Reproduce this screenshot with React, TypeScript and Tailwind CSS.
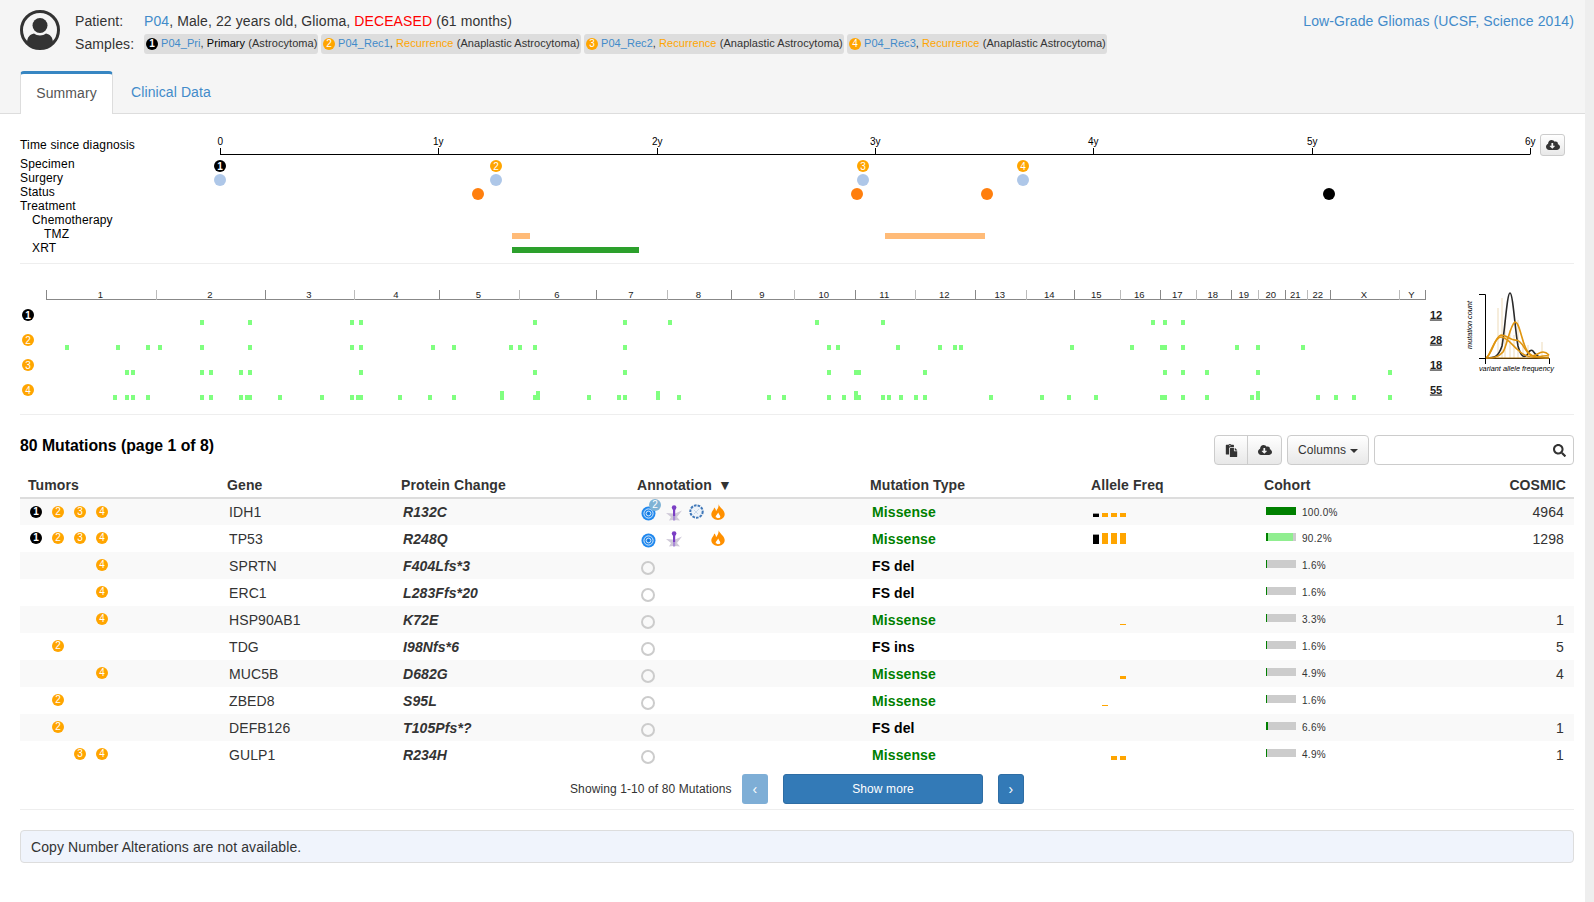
import { FaCloudDownloadAlt, FaPaste, FaSearch } from 'react-icons/fa';

const ORANGE = '#ffa500';

// page-coordinate data for the two charts, x values read off the plot
const chromTicks = [46, 156, 265, 354, 439, 519, 596, 667, 731, 794, 855, 915, 975, 1026, 1074, 1120, 1160, 1196, 1231, 1258, 1285, 1307, 1330, 1399, 1425];
const chromNames = ['1', '2', '3', '4', '5', '6', '7', '8', '9', '10', '11', '12', '13', '14', '15', '16', '17', '18', '19', '20', '21', '22', 'X', 'Y'];

const genomeRows = [
  { y: 325, count: 12, xs: [202, 250, 352, 361, 535, 625, 670, 817, 883, 1153, 1165, 1183], tall: [] as number[] },
  { y: 350, count: 28, xs: [67, 118, 148, 160, 202, 250, 352, 361, 433, 454, 511, 520, 535, 625, 829, 838, 898, 940, 955, 961, 1072, 1132, 1162, 1165, 1183, 1237, 1258, 1303], tall: [] as number[] },
  { y: 375, count: 18, xs: [127, 133, 202, 211, 241, 250, 361, 535, 625, 829, 856, 859, 925, 1165, 1183, 1207, 1258, 1390], tall: [] as number[] },
  { y: 400, count: 55, xs: [115, 127, 133, 148, 202, 211, 241, 247, 250, 280, 322, 352, 358, 361, 400, 430, 454, 535, 589, 619, 625, 679, 769, 784, 829, 844, 859, 883, 889, 901, 916, 925, 991, 1042, 1069, 1096, 1162, 1165, 1183, 1207, 1252, 1318, 1336, 1354, 1390], tall: [502, 538, 658, 856, 1258] },
];

type Mutation = {
  tumors: number[];
  gene: string;
  protein: string;
  type: string;
  annotated?: 'full' | 'partial';
  freq?: number[];
  cohort: number;
  cohortLabel: string;
  cosmic?: number;
};

const mutations: Mutation[] = [
  { tumors: [1, 2, 3, 4], gene: 'IDH1', protein: 'R132C', type: 'Missense', annotated: 'full', freq: [4, 4, 4, 4], cohort: 100, cohortLabel: '100.0%', cosmic: 4964 },
  { tumors: [1, 2, 3, 4], gene: 'TP53', protein: 'R248Q', type: 'Missense', annotated: 'partial', freq: [10, 11, 11, 11], cohort: 90.2, cohortLabel: '90.2%', cosmic: 1298 },
  { tumors: [4], gene: 'SPRTN', protein: 'F404Lfs*3', type: 'FS del', cohort: 1.6, cohortLabel: '1.6%' },
  { tumors: [4], gene: 'ERC1', protein: 'L283Ffs*20', type: 'FS del', cohort: 1.6, cohortLabel: '1.6%' },
  { tumors: [4], gene: 'HSP90AB1', protein: 'K72E', type: 'Missense', freq: [0, 0, 0, 1], cohort: 3.3, cohortLabel: '3.3%', cosmic: 1 },
  { tumors: [2], gene: 'TDG', protein: 'I98Nfs*6', type: 'FS ins', cohort: 1.6, cohortLabel: '1.6%', cosmic: 5 },
  { tumors: [4], gene: 'MUC5B', protein: 'D682G', type: 'Missense', freq: [0, 0, 0, 3], cohort: 4.9, cohortLabel: '4.9%', cosmic: 4 },
  { tumors: [2], gene: 'ZBED8', protein: 'S95L', type: 'Missense', freq: [0, 1, 0, 0], cohort: 1.6, cohortLabel: '1.6%' },
  { tumors: [2], gene: 'DEFB126', protein: 'T105Pfs*?', type: 'FS del', cohort: 6.6, cohortLabel: '6.6%', cosmic: 1 },
  { tumors: [3, 4], gene: 'GULP1', protein: 'R234H', type: 'Missense', freq: [0, 0, 4, 4], cohort: 4.9, cohortLabel: '4.9%', cosmic: 1 },
];

const samples = [
  { n: 1, name: 'P04_Pri', kind: 'Primary', kindClass: 'text-black', diag: 'Astrocytoma' },
  { n: 2, name: 'P04_Rec1', kind: 'Recurrence', kindClass: 'text-[#ffa500]', diag: 'Anaplastic Astrocytoma' },
  { n: 3, name: 'P04_Rec2', kind: 'Recurrence', kindClass: 'text-[#ffa500]', diag: 'Anaplastic Astrocytoma' },
  { n: 4, name: 'P04_Rec3', kind: 'Recurrence', kindClass: 'text-[#ffa500]', diag: 'Anaplastic Astrocytoma' },
];

function Dot({ n }: { n: number }) {
  return (
    <span
      className={`flex h-3 w-3 shrink-0 items-center justify-center rounded-full text-[10px] leading-none tracking-normal text-white ${n === 1 ? 'bg-black font-bold' : 'bg-[#ffa500]'}`}>
      {n}
    </span>
  );
}

function SvgDot({ x, y, n, r = 6 }: { x: number; y: number; n: number; r?: number }) {
  return (
    <g>
      <circle cx={x} cy={y} r={r} fill={n === 1 ? '#000' : ORANGE} />
      <text x={x} y={y + 3.5} textAnchor="middle" fontSize="10" fontWeight={n === 1 ? 700 : 400} fill="#fff">
        {n}
      </text>
    </g>
  );
}

function Avatar() {
  return (
    <svg width="40" height="40" viewBox="0 0 40 40" className="shrink-0">
      <circle cx="20" cy="20" r="18.5" fill="#f5f5f5" stroke="#333" strokeWidth="3" />
      <circle cx="20" cy="15.5" r="7.5" fill="#333" />
      <path d="M7 33 C7 27 10 24.5 14 23.5 C17 26 23 26 26 23.5 C30 24.5 33 27 33 33 C29 37 24 38 20 38 C16 38 11 37 7 33Z" fill="#333" />
    </svg>
  );
}

function TargetIcon() {
  return (
    <svg width="15" height="15" viewBox="0 0 15 15">
      <circle cx="7.5" cy="7.5" r="7" fill="#2088ee" />
      <circle cx="7.5" cy="7.5" r="4.6" fill="none" stroke="#d8e9fa" strokeWidth="1" />
      <circle cx="7.5" cy="7.5" r="2.4" fill="none" stroke="#cfe4f9" strokeWidth="1" />
      <circle cx="7.5" cy="7.5" r="0.9" fill="#0f6fd0" />
    </svg>
  );
}

function SpliceIcon() {
  return (
    <svg width="16" height="16" viewBox="0 0 16 16">
      <path d="M0 8 L7 8.5 L7 15 L3 15.5 L5 12Z" fill="#cfc9d8" />
      <path d="M16 5.5 L9 8.5 L9 15 L14 15.5 L11 12Z" fill="#cfc9d8" />
      <rect x="7" y="11" width="2.2" height="4.5" fill="#a98bd6" />
      <rect x="7" y="3" width="2.2" height="8" fill="#7b3fc4" />
      <circle cx="8.1" cy="2.6" r="2.3" fill="#7b3fc4" />
    </svg>
  );
}

function CivicIcon() {
  return (
    <svg width="15" height="15" viewBox="0 0 15 15" className="shrink-0">
      <circle cx="7.5" cy="7.5" r="6.2" fill="#eef3f9" stroke="#3f77b8" strokeWidth="2" strokeDasharray="2.6 1.1" />
      <path d="M5 10 L10 5 M5 6 L9 10" stroke="#bcd0e6" strokeWidth="0.8" />
    </svg>
  );
}

function FlameIcon() {
  return (
    <svg width="14" height="16" viewBox="0 0 14 16" className="shrink-0">
      <path d="M7.5 0 C8 3 12.5 5 13.5 9 C14.5 13 11 16 7 16 C3 16 -0.5 13 0.5 9 C1 7 2.8 6 3.2 3.5 C4.5 4.6 5 6 5 7.2 C6.5 5 8 3 7.5 0Z" fill="#ff9000" />
      <path d="M7.2 8.5 C7.8 10.5 9.6 11.4 9.3 13 C9 14.6 5 14.6 4.7 13 C4.4 11.6 6.5 10.5 7.2 8.5Z" fill="#fff" />
    </svg>
  );
}

function Annotation({ kind }: { kind?: 'full' | 'partial' }) {
  if (!kind) {
    return (
      <div className="mt-[4px] ml-[2px] h-[14px] w-[14px] rounded-full border-[2.5px] border-[#ccc]" />
    );
  }
  return (
    <div className="mt-[3px] flex items-center">
      <span className="relative flex w-[18px] justify-center">
        <TargetIcon />
        {kind === 'full' && (
          <span className="absolute -top-[7px] left-[10px] flex h-[12px] w-[12px] items-center justify-center rounded-full bg-[#7fb3d5] text-[10px] leading-none text-white">
            2
          </span>
        )}
      </span>
      <span className="flex w-[34px] -translate-y-[1px] justify-center">
        <SpliceIcon />
      </span>
      <span className="flex w-[10px] -translate-y-[2px] justify-center">{kind === 'full' && <CivicIcon />}</span>
      <span className="flex w-[34px] -translate-y-[2px] justify-center">
        <FlameIcon />
      </span>
    </div>
  );
}

function FreqBars({ values }: { values: number[] }) {
  return (
    <div className="mb-[1px] flex h-[11px] items-end gap-[3px]">
      {values.map((h, i) =>
        i === 0 && h > 0 ? (
          <div key={i} className="w-[6px] border-t border-[#999] bg-black" style={{ height: h }} />
        ) : (
          <div key={i} className="w-[6px] bg-[#ffa500]" style={{ height: h }} />
        )
      )}
    </div>
  );
}

function CohortBar({ pct, label }: { pct: number; label: string }) {
  return (
    <div className="mb-[3px] flex items-center">
      <div className="relative h-[8px] w-[30px] bg-[#ccc]">
        <div className="absolute inset-y-0 left-0 bg-[#90ee90]" style={{ width: `${pct}%` }} />
        <div className="absolute inset-y-0 left-0 bg-[#008000]" style={{ width: pct >= 100 ? '100%' : `${Math.max(pct > 10 ? 2 : (pct * 30) / 100, 0.6)}px` }} />
      </div>
      <span className="ml-[6px] translate-y-[2px] text-[10px] leading-none tracking-[0.3px] text-[#333]">{label}</span>
    </div>
  );
}

function Timeline() {
  const years = ['0', '1y', '2y', '3y', '4y', '5y', '6y'];
  return (
    <svg width="1326" height="133" viewBox="210 130 1326 133" className="shrink-0 tracking-normal">
      <line x1="220" y1="154.5" x2="1530.5" y2="154.5" stroke="#000" strokeWidth="1" />
      {years.map((label, i) => {
        const x = Math.round(220 + i * 218.3) + 0.5;
        return (
          <g key={label}>
            <line x1={x} y1="148" x2={x} y2="154" stroke="#000" />
            <text x={x - 0.3} y="145" textAnchor="middle" fontSize="10" fill="#000">
              {label}
            </text>
          </g>
        );
      })}
      <SvgDot x={220} y={166} n={1} />
      <SvgDot x={496} y={166} n={2} />
      <SvgDot x={863} y={166} n={3} />
      <SvgDot x={1023} y={166} n={4} />
      {[220, 496, 863, 1023].map(x => (
        <circle key={x} cx={x} cy="180" r="6" fill="#aec7e8" />
      ))}
      {[478, 857, 987].map(x => (
        <circle key={x} cx={x} cy="194" r="6" fill="#ff7f0e" />
      ))}
      <circle cx="1329" cy="194" r="6" fill="#000" />
      <rect x="512" y="233" width="18" height="6" fill="#ffbb78" />
      <rect x="885" y="233" width="100" height="6" fill="#ffbb78" />
      <rect x="512" y="247" width="127" height="6" fill="#2ca02c" />
    </svg>
  );
}

function GenomePlot() {
  return (
    <svg width="1554" height="150" viewBox="20 264 1554 150" className="block tracking-normal">
      <line x1="46" y1="299.5" x2="1425" y2="299.5" stroke="#888" />
      {chromTicks.map((x, i) => (
        <line key={x} x1={x + 0.5} y1="290" x2={x + 0.5} y2="300" stroke={i % 2 === 0 ? '#888' : '#bbb'} />
      ))}
      {chromNames.map((name, i) => (
        <text key={name} x={(chromTicks[i] + chromTicks[i + 1]) / 2 - 0.7} y="298" textAnchor="middle" fontSize="9.5" fill="#222">
          {name}
        </text>
      ))}
      {genomeRows.map((row, r) => (
        <g key={row.count}>
          <SvgDot x={28} y={row.y - 10} n={r + 1} />
          {row.xs.map((x, i) => (
            <rect key={i} x={x - 2} y={row.y - 5} width="4" height="5" fill="#80ff80" />
          ))}
          {row.tall.map(x => (
            <rect key={x} x={x - 2} y={row.y - 9} width="4" height="9" fill="#80ff80" />
          ))}
          <text x="1436" y={row.y - 6.5} textAnchor="middle" fontSize="11" fontWeight="700" fill="#222" textDecoration="underline">
            {row.count}
          </text>
        </g>
      ))}
      {/* VAF panel */}
      {[1497, 1501, 1504, 1509, 1513, 1517, 1522, 1527, 1541].map((x, i) => (
        <rect key={x} x={x} y={[308, 298, 320, 330, 335, 320, 340, 345, 342][i]} width="2" height={[50, 60, 38, 28, 23, 38, 18, 13, 16][i]} fill="#f6eddc" />
      ))}
      <path d="M1479 294.5 H1485.5 V358.5 M1479 358.5 H1549.5 M1485.5 358.5 V364 M1549.5 358.5 V364" fill="none" stroke="#000" />
      <path d="M1486 358 C1494 358 1498 358 1502 346 C1505 330 1507 293 1510 293 C1513 293 1515 330 1518 346 C1521 357 1524 358 1527 355 C1529 351 1531 349 1533 351 C1535 354 1537 358 1549 358" fill="none" stroke="#2a2a2a" strokeWidth="1.6" />
      <path d="M1486 358 C1492 358 1498 358 1503 352 C1507 346 1510 325 1515 322 C1520 322 1522 345 1528 352 C1533 358 1540 358 1549 358" fill="none" stroke="#e0950f" strokeWidth="1.6" />
      <path d="M1486 358 C1492 355 1495 336 1501 335 C1507 335 1511 341 1516 340 C1522 340 1524 350 1530 355 C1535 358 1538 352 1543 352 C1546 352 1548 354 1549 355" fill="none" stroke="#e0950f" strokeWidth="1.6" />
      <path d="M1486 358 C1490 357 1494 337 1501 337 C1507 337 1512 345 1518 350 C1524 356 1530 358 1537 357 C1542 356 1546 355 1549 356" fill="none" stroke="#e0950f" strokeWidth="1.6" />
      <line x1="1486" y1="358" x2="1549" y2="358" stroke="#b5770c" strokeWidth="1" />
      <text x="1516.5" y="370.5" textAnchor="middle" fontSize="7.3" fontStyle="italic" fill="#000">
        variant allele frequency
      </text>
      <text x="1472" y="325" textAnchor="middle" fontSize="7.3" fontStyle="italic" fill="#000" transform="rotate(-90 1472 325)">
        mutation count
      </text>
    </svg>
  );
}

export default function App() {
  return (
    <div className="flex h-[902px] overflow-hidden bg-white text-sm tracking-[0.1px] text-[#333] [font-family:'Liberation_Sans',Arial,sans-serif]">
      <div className="w-[1585px] shrink-0">
        {/* Patient header */}
        <div className="h-[114px] border-b border-[#ddd] bg-[#f5f5f5] pt-[10px] pr-[11px] pl-5">
          <div className="flex h-[61px] gap-[15px]">
            <Avatar />
            <div className="flex-1">
              <div className="flex h-[21px] items-center justify-between pt-[1px] leading-5">
                <div>
                  <span className="inline-block w-[69px]">Patient:</span>
                  <span className="text-[#428bca]">P04</span>, Male, 22 years old, Glioma,{' '}
                  <span className="text-[#f00]">DECEASED</span> (61 months)
                </div>
                <a className="text-[#428bca]">Low-Grade Gliomas (UCSF, Science 2014)</a>
              </div>
              <div className="mt-[3px] flex items-center">
                <span className="inline-block w-[69px]">Samples:</span>
                <div className="flex gap-[3px]">
                  {samples.map(s => (
                    <div key={s.n} className={`flex h-[20px] items-center gap-[3px] rounded-[3px] bg-[#ddd] px-[2px] text-[11px] tracking-[0.06px] whitespace-nowrap ${s.n === 1 ? 'w-[174px]' : 'w-[260px]'}`}>
                      <Dot n={s.n} />
                      <span>
                        <span className="text-[#428bca]">{s.name}</span>, <span className={s.kindClass}>{s.kind}</span> ({s.diag})
                      </span>
                    </div>
                  ))}
                </div>
              </div>
            </div>
          </div>
          {/* Tabs */}
          <div className="flex h-[43px]">
            <div className="flex w-[93px] items-center justify-center rounded-t-[4px] border-x border-t-[3px] border-x-[#ddd] border-t-[#3786c2] bg-white pb-[3px] text-[#555]">
              Summary
            </div>
            <div className="flex items-center pb-[2px] pl-[18px] text-[#428bca]">Clinical Data</div>
          </div>
        </div>

        <div className="pr-[11px] pl-5">
          {/* Timeline */}
          <div className="flex items-start pt-[16px]">
            <div className="w-[190px] shrink-0 pt-[8px] text-xs leading-[14px] tracking-[0.17px] text-black">
              <div className="mb-[5px]">Time since diagnosis</div>
              <div>Specimen</div>
              <div>Surgery</div>
              <div>Status</div>
              <div>Treatment</div>
              <div className="pl-3">Chemotherapy</div>
              <div className="pl-6">TMZ</div>
              <div className="pl-3">XRT</div>
            </div>
            <Timeline />
            <button className="mt-[4px] ml-[4px] flex h-[22px] w-[25px] items-center justify-center rounded-[3px] border border-[#ccc] bg-linear-to-b from-white to-[#e8e8e8]">
              <FaCloudDownloadAlt size={14} color="#333" />
            </button>
          </div>
          <div className="border-t border-[#eee]" />

          <GenomePlot />
          <div className="border-t border-[#eee]" />

          {/* Mutations toolbar */}
          <div className="flex h-[58px] items-start justify-between">
            <div className="pt-[19px] text-[15.8px] leading-6 font-bold tracking-normal text-black">80 Mutations (page 1 of 8)</div>
            <div className="flex items-center gap-[5px] pt-[20px]">
              <div className="flex h-[30px] w-[68px] rounded-[4px] border border-[#ccc] bg-linear-to-b from-white to-[#e8e8e8]">
                <button className="flex w-[33px] items-center justify-center border-r border-[#ccc]">
                  <FaPaste size={13} color="#333" />
                </button>
                <button className="flex flex-1 items-center justify-center">
                  <FaCloudDownloadAlt size={14} color="#333" />
                </button>
              </div>
              <button className="flex h-[30px] w-[82px] items-center justify-center gap-[4px] rounded-[4px] border border-[#ccc] bg-linear-to-b from-white to-[#e8e8e8] text-xs text-[#333]">
                Columns
                <span className="mt-[1px] border-x-[4px] border-t-[4px] border-x-transparent border-t-[#333]" />
              </button>
              <div className="flex h-[30px] w-[200px] items-center justify-end rounded-[4px] border border-[#ccc] bg-white pr-[7px]">
                <FaSearch size={13} color="#333" />
              </div>
            </div>
          </div>

          {/* Mutations table */}
          <table className="w-[1554px] table-fixed border-collapse">
            <colgroup>
              <col className="w-[199px]" />
              <col className="w-[174px]" />
              <col className="w-[236px]" />
              <col className="w-[233px]" />
              <col className="w-[221px]" />
              <col className="w-[173px]" />
              <col className="w-[172px]" />
              <col />
            </colgroup>
            <thead>
              <tr className="h-[25px] border-b-2 border-[#ddd] text-left font-bold">
                <th className="pl-2">Tumors</th>
                <th className="pl-2">Gene</th>
                <th className="pl-2">Protein Change</th>
                <th className="pl-2">
                  Annotation<span className="ml-[6px]">▼</span>
                </th>
                <th className="pl-2">Mutation Type</th>
                <th className="pl-2">Allele Freq</th>
                <th className="pl-2">Cohort</th>
                <th className="pr-2 text-right">COSMIC</th>
              </tr>
            </thead>
            <tbody>
              {mutations.map((m, i) => (
                <tr key={m.gene} className={`h-[27px] ${i % 2 === 0 ? 'bg-[#f9f9f9]' : 'bg-white'}`}>
                  <td className="pl-[10px]">
                    <div className="mb-[1px] flex gap-[10px]">
                      {[1, 2, 3, 4].map(n =>
                        m.tumors.includes(n) ? <Dot key={n} n={n} /> : <span key={n} className="w-3" />
                      )}
                    </div>
                  </td>
                  <td className="pl-[10px]">{m.gene}</td>
                  <td className="pl-[10px] font-bold italic">{m.protein}</td>
                  <td className="pl-[10px]">
                    <Annotation kind={m.annotated} />
                  </td>
                  <td className={`pl-[10px] font-bold ${m.type === 'Missense' ? 'text-[#008000]' : 'text-black'}`}>{m.type}</td>
                  <td className="pl-[10px]">{m.freq && <FreqBars values={m.freq} />}</td>
                  <td className="pl-[10px]">
                    <CohortBar pct={m.cohort} label={m.cohortLabel} />
                  </td>
                  <td className="pr-[10px] text-right">{m.cosmic}</td>
                </tr>
              ))}
            </tbody>
          </table>

          {/* Pager */}
          <div className="flex h-[42px] items-center border-b border-[#eee] pl-[550px]">
            <span className="w-[172px] text-xs">Showing 1-10 of 80 Mutations</span>
            <button className="flex h-[30px] w-[26px] items-center justify-center rounded-[3px] bg-[#7eaed6] text-white">‹</button>
            <button className="ml-[15px] h-[30px] w-[200px] rounded-[3px] border border-[#2e6da4] bg-[#337ab7] text-xs text-white">Show more</button>
            <button className="ml-[15px] flex h-[30px] w-[26px] items-center justify-center rounded-[3px] border border-[#2e6da4] bg-[#337ab7] text-white">›</button>
          </div>

          <div className="mt-[20px] flex h-[33px] items-center rounded-[4px] border border-[#ddd] bg-[#f0f4fc] pl-[10px]">
            Copy Number Alterations are not available.
          </div>
        </div>
      </div>
      {/* page scrollbar gutter */}
      <div className="w-[9px] bg-[#eee]" />
    </div>
  );
}
